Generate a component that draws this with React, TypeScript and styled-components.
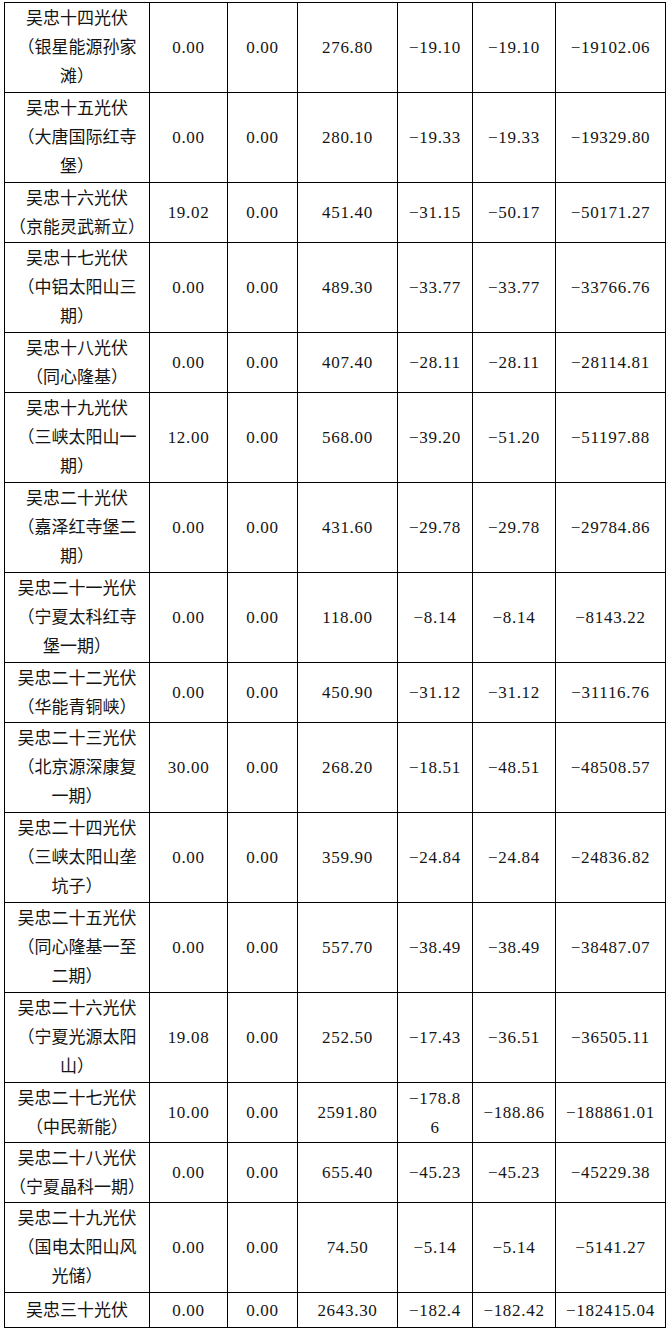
import { createGlobalStyle } from "styled-components"
import styled from "styled-components"

type Row = {
    name: string[]
    values: string[][]
}

const rows: Row[] = [
    { name: ["吴忠十四光伏", "（银星能源孙家", "滩）"], values: [["0.00"], ["0.00"], ["276.80"], ["−19.10"], ["−19.10"], ["−19102.06"]] },
    { name: ["吴忠十五光伏", "（大唐国际红寺", "堡）"], values: [["0.00"], ["0.00"], ["280.10"], ["−19.33"], ["−19.33"], ["−19329.80"]] },
    { name: ["吴忠十六光伏", "（京能灵武新立）"], values: [["19.02"], ["0.00"], ["451.40"], ["−31.15"], ["−50.17"], ["−50171.27"]] },
    { name: ["吴忠十七光伏", "（中铝太阳山三", "期）"], values: [["0.00"], ["0.00"], ["489.30"], ["−33.77"], ["−33.77"], ["−33766.76"]] },
    { name: ["吴忠十八光伏", "（同心隆基）"], values: [["0.00"], ["0.00"], ["407.40"], ["−28.11"], ["−28.11"], ["−28114.81"]] },
    { name: ["吴忠十九光伏", "（三峡太阳山一", "期）"], values: [["12.00"], ["0.00"], ["568.00"], ["−39.20"], ["−51.20"], ["−51197.88"]] },
    { name: ["吴忠二十光伏", "（嘉泽红寺堡二", "期）"], values: [["0.00"], ["0.00"], ["431.60"], ["−29.78"], ["−29.78"], ["−29784.86"]] },
    { name: ["吴忠二十一光伏", "（宁夏太科红寺", "堡一期）"], values: [["0.00"], ["0.00"], ["118.00"], ["−8.14"], ["−8.14"], ["−8143.22"]] },
    { name: ["吴忠二十二光伏", "（华能青铜峡）"], values: [["0.00"], ["0.00"], ["450.90"], ["−31.12"], ["−31.12"], ["−31116.76"]] },
    { name: ["吴忠二十三光伏", "（北京源深康复", "一期）"], values: [["30.00"], ["0.00"], ["268.20"], ["−18.51"], ["−48.51"], ["−48508.57"]] },
    { name: ["吴忠二十四光伏", "（三峡太阳山垄", "坑子）"], values: [["0.00"], ["0.00"], ["359.90"], ["−24.84"], ["−24.84"], ["−24836.82"]] },
    { name: ["吴忠二十五光伏", "（同心隆基一至", "二期）"], values: [["0.00"], ["0.00"], ["557.70"], ["−38.49"], ["−38.49"], ["−38487.07"]] },
    { name: ["吴忠二十六光伏", "（宁夏光源太阳", "山）"], values: [["19.08"], ["0.00"], ["252.50"], ["−17.43"], ["−36.51"], ["−36505.11"]] },
    { name: ["吴忠二十七光伏", "（中民新能）"], values: [["10.00"], ["0.00"], ["2591.80"], ["−178.8", "6"], ["−188.86"], ["−188861.01"]] },
    { name: ["吴忠二十八光伏", "（宁夏晶科一期）"], values: [["0.00"], ["0.00"], ["655.40"], ["−45.23"], ["−45.23"], ["−45229.38"]] },
    { name: ["吴忠二十九光伏", "（国电太阳山风", "光储）"], values: [["0.00"], ["0.00"], ["74.50"], ["−5.14"], ["−5.14"], ["−5141.27"]] },
    { name: ["吴忠三十光伏"], values: [["0.00"], ["0.00"], ["2643.30"], ["−182.4"], ["−182.42"], ["−182415.04"]] },
]

const widths = [145, 78, 70, 100, 75, 83, 110]

export default function App() {
    return (
        <>
            <GlobalStyle />
            <Page>
                <Table>
                    <colgroup>
                        {widths.map((w, i) => <Col key={i} $w={w} />)}
                    </colgroup>
                    <tbody>
                        {rows.map((row, i) => (
                            <Tr key={i} $h={row.name.length === 1 ? 35 : row.name.length * 30}>
                                <Cell>
                                    {row.name.map((line, j) => <Line key={j}>{line}</Line>)}
                                </Cell>
                                {row.values.map((v, j) => (
                                    <Cell key={j} $numeric>
                                        {v.map((line, k) => <Line key={k}>{line}</Line>)}
                                    </Cell>
                                ))}
                            </Tr>
                        ))}
                    </tbody>
                </Table>
            </Page>
        </>
    )
}

const GlobalStyle = createGlobalStyle`
    html, body {
        margin: 0;
        padding: 0;
        background: #fff;
    }
`

const Page = styled.div`
    padding: 2px 0 0 4px;
    font-family: "Liberation Serif", "Noto Sans CJK SC", serif;
    font-size: 17px;
    color: #141414;
`

const Table = styled.table`
    border-collapse: collapse;
    table-layout: fixed;
    width: 661px;
`

const Col = styled.col<{ $w: number }>`
    width: ${({ $w }) => $w}px;
`

const Tr = styled.tr<{ $h: number }>`
    height: ${({ $h }) => $h}px;
`

const Cell = styled.td<{ $numeric?: boolean }>`
    border: 1px solid #000;
    padding: 0;
    text-align: center;
    vertical-align: middle;
    letter-spacing: ${({ $numeric }) => ($numeric ? "0.7px" : "0")};
`

const Line = styled.div`
    height: 29px;
    line-height: 29px;
    white-space: nowrap;
    overflow: visible;
`
